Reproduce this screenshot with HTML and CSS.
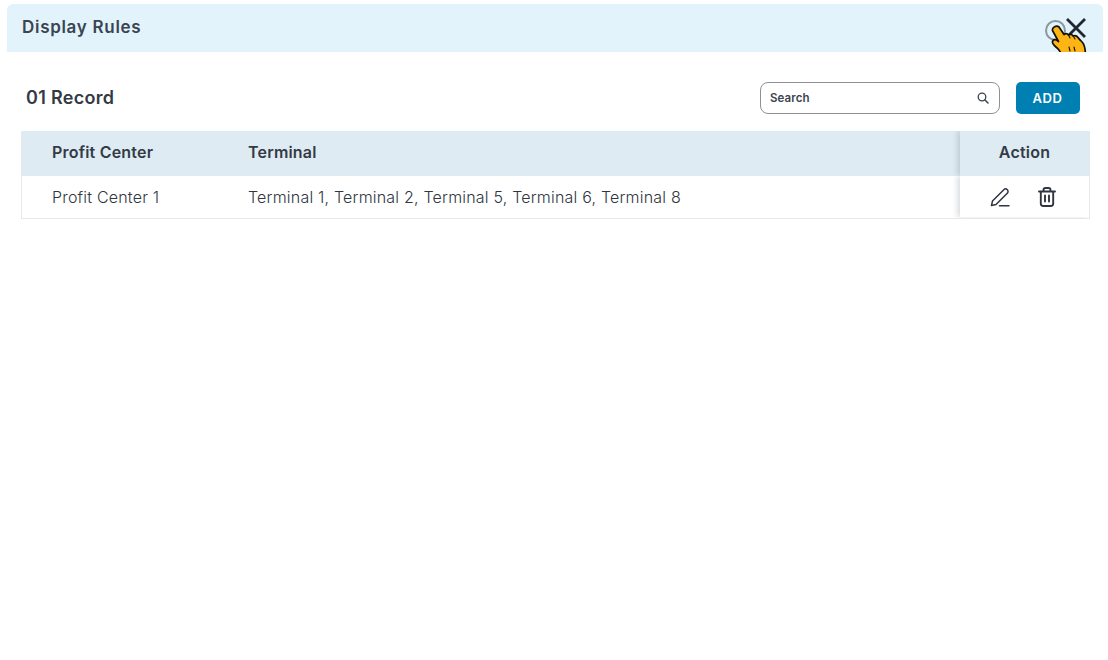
FILE: index.html
```html
<!DOCTYPE html>
<html lang="en">
<head>
<meta charset="utf-8">
<title>Display Rules</title>
<link rel="stylesheet" href="styles.css">
</head>
<body>
<div class="dialog">
  <header class="titlebar">
    <h1 class="title">Display Rules</h1>
    <div class="close-wrap">
      <svg class="close" width="20" height="20" viewBox="0 0 20 20"><path d="M1 1 19 19M19 1 1 19" stroke="#1f2733" stroke-width="2.800" fill="none"/></svg>
      <span class="ring"></span>
      <svg class="hand" width="36" height="30" viewBox="0 0 36 30">
        <path d="M1.500 6.500C.8 3.500 5.500 .8 8 3L13 10.500C14.500 9.500 16.500 9.800 17.500 11C19 10 21 10.300 22.200 12C23.800 11.200 25.800 11.800 27 13.500L31.500 18.500C33.500 21 34.500 26 34.500 32L10.500 32C10 28 8 25.500 5.500 23.500C3 21.500 1 19.500 1.500 17.500C2 15.500 4.500 15 6 16.300L7.500 17.500Z" fill="#fdb515" stroke="#111" stroke-width="1.700" stroke-linejoin="round"/>
        <path d="M17.500 11 19 14M22.200 12 24 15M27 13.500 28.500 16M18 23 19 27M23 23 24 27" stroke="#111" stroke-width="1.100" fill="none" stroke-linecap="round"/>
      </svg>
    </div>
  </header>
  <div class="toolbar">
    <div class="count">01 Record</div>
    <div class="tools">
      <label class="search">
        <span class="search-label">Search</span>
        <svg width="12" height="12" viewBox="0 0 12 12"><circle cx="5" cy="5" r="3.800" fill="none" stroke="#3b4350" stroke-width="1.300"/><path d="M8 8 11 11" stroke="#3b4350" stroke-width="1.500" stroke-linecap="round"/></svg>
      </label>
      <button class="add" type="button">ADD</button>
    </div>
  </div>
  <div class="table">
    <div class="row head">
      <div class="c1">Profit Center</div>
      <div class="c2">Terminal</div>
      <div class="c3">Action</div>
    </div>
    <div class="row body">
      <div class="c1">Profit Center 1</div>
      <div class="c2">Terminal 1, Terminal 2, Terminal 5, Terminal 6, Terminal 8</div>
      <div class="c3 actions">
        <svg width="22" height="22" viewBox="0 0 22 22"><path d="M2.500 19.500 3.500 15 14.800 3.700C15.800 2.700 17.300 2.700 18.300 3.700 19.300 4.700 19.300 6.200 18.300 7.200L7 18.500Z" fill="none" stroke="#2f3642" stroke-width="1.500" stroke-linejoin="round"/><path d="M10.500 19.700H20" stroke="#2f3642" stroke-width="1.500" stroke-linecap="round"/></svg>
        <svg width="22" height="22" viewBox="0 0 22 22"><path d="M3 5.500H19M7.500 5.500V4C7.500 2.800 8.300 2 9.500 2H12.500C13.700 2 14.500 2.800 14.500 4V5.500M4.800 5.500V17.500C4.800 19 5.800 20 7.300 20H14.700C16.200 20 17.200 19 17.200 17.500V5.500M9 9.500V15.500M13 9.500V15.500" fill="none" stroke="#2f3642" stroke-width="1.900" stroke-linecap="round" stroke-linejoin="round"/></svg>
      </div>
    </div>
  </div>
</div>
</body>
</html>
```
FILE: styles.css
```css
* { box-sizing: border-box; }
html, body { margin: 0; height: 100%; background: #fff; }
body { font-family: Inter, "Liberation Sans", sans-serif; color: #2f3642; overflow: hidden; }
.dialog { padding: 4px 5px 0 7px; }
.titlebar {
  height: 48px; background: #e2f3fb; border-radius: 6px 6px 0 0;
  display: flex; align-items: center; justify-content: space-between;
  padding: 0 17px 0 15px; position: relative; overflow: hidden;
}
.title { margin: 0 0 2px; font-size: 17px; font-weight: 600; letter-spacing: .7px; color: #3b4452; }
.close-wrap { width: 20px; height: 20px; position: relative; }
.close { display: block; }
.ring {
  position: absolute; left: -21px; top: 2px; width: 21px; height: 21px;
  border: 2px solid #8b979e; border-radius: 50%;
}
.hand { position: absolute; left: -15px; top: 6px; }
.toolbar {
  display: flex; align-items: center; justify-content: space-between;
  padding: 30px 23px 0 19px;
}
.count { font-size: 18px; font-weight: 600; letter-spacing: .3px; color: #333a46; margin-bottom: 2px; }
.tools { display: flex; align-items: center; gap: 16px; }
.search {
  width: 240px; height: 32px; border: 1px solid #8f8f98; border-radius: 8px;
  display: flex; align-items: center; justify-content: space-between;
  padding: 0 10px 0 9px;
}
.search-label { font-size: 11.500px; font-weight: 600; letter-spacing: .1px; color: #3b4350; }
.add {
  width: 64px; height: 32px; border: 0; border-radius: 5px; background: #0080b2;
  color: #fff; font: 600 13px Inter, "Liberation Sans", sans-serif; letter-spacing: .6px; padding: 0 1px 0 0;
}
.table {
  margin: 17px 13px 0 14px; border: 1px solid #e8e8e8; border-top: 0;
}
.row { display: grid; grid-template-columns: 226px 1fr 129px; align-items: center; overflow: hidden; font-size: 16px; letter-spacing: .2px; }
.c1 { padding-left: 30px; }
.head { height: 45px; background: #deebf3; font-weight: 600; color: #333a46; padding-bottom: 3px; }
.head .c3 { margin-bottom: -3px; padding-bottom: 3px; height: 45px; }
.body { height: 42px; font-weight: 300; color: #2f3642; padding-bottom: 1px; }
.c3 { height: 100%; display: flex; align-items: center; justify-content: center; box-shadow: -3px 0 5px rgba(60,80,100,.18); }
.actions { gap: 25px; padding-right: 2px; }
```
